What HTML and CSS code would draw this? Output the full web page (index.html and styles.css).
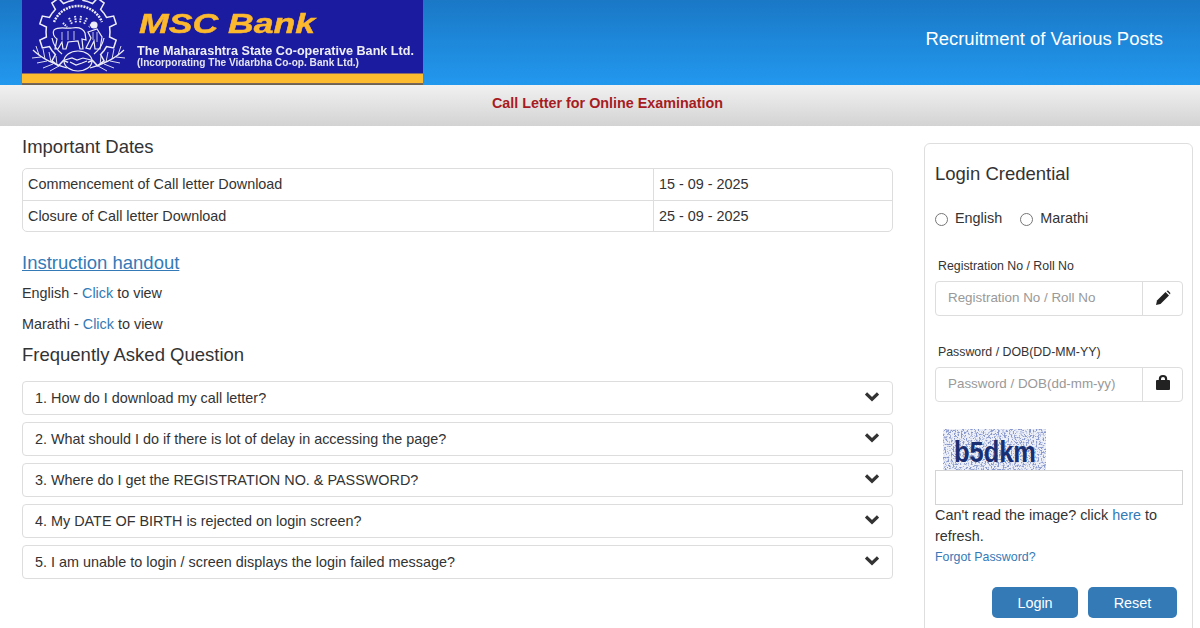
FILE: index.html
```html
<!DOCTYPE html>
<html lang="en">
<head>
<meta charset="utf-8">
<title>MSC Bank - Recruitment of Various Posts</title>
<link rel="stylesheet" href="styles.css">
</head>
<body>
<header class="top">
  <svg class="logo" width="401" height="85" viewBox="0 0 401 85">
    <defs>
      <path id="tooth" d="M-9.900-30.400L-5-31.600L-4.100-38.800L4.100-38.800L5-31.600L9.900-30.400"/>
      <g id="wheat"><path d="M0 0C8 8 22 15 34 18"/><path d="M6 5L3-4M12 9L10-1M18 12L16 2M24 15L23 6M8 7L-1 8M14 11L4 13M20 14L10 18M26 16L17 21" stroke-width=".9"/></g>
      <filter id="soft"><feGaussianBlur stdDeviation="0.35"/></filter>
      <filter id="shadow" x="-5%" y="-30%" width="110%" height="160%"><feGaussianBlur stdDeviation="0.3"/></filter>
    </defs>
    <rect width="401" height="85" fill="#1b1ba0"/>
    <rect y="73.500" width="401" height="10" fill="#fdbb30"/>
    <rect y="83.500" width="401" height="1.500" fill="#6b6250"/>
    <g filter="url(#soft)">
      <g transform="translate(56 32)" fill="none" stroke="#eeeef9" stroke-width="1.500">
        <use href="#tooth"/><use href="#tooth" transform="rotate(36)"/><use href="#tooth" transform="rotate(72)"/><use href="#tooth" transform="rotate(108)"/><use href="#tooth" transform="rotate(144)"/><use href="#tooth" transform="rotate(216)"/><use href="#tooth" transform="rotate(252)"/><use href="#tooth" transform="rotate(288)"/><use href="#tooth" transform="rotate(324)"/>
        <path d="M-24 -10A26 26 0 0 1 24 -10" stroke-width="2.500" stroke-dasharray="2 1"/>
        <path d="M-15-9L-11-5M-9-14L-6-8M-3-16L-2-9M3-16L2-9M9-14L6-8M15-9L11-5" stroke-width="2" stroke-dasharray="1.500 1"/>
        <path d="M-26 6A27 27 0 0 0 -16 22M26 6A27 27 0 0 1 16 22" stroke-width="1.200"/>
      </g>
      <g fill="none" stroke="#eeeef9" stroke-width="1.200">
        <path d="M32 30C37 26 44 29 50 28C56 27 61 28 63 33L64 40L60 39L61 49L58 49L56 41L46 42L44 49L41 49L40 42L36 49L33 49L35 39C32 37 30 33 32 30Z"/>
        <path d="M40 32L40 40M46 31L46 40M52 31L52 40" stroke-width=".8"/>
        <circle cx="72" cy="25" r="3" fill="#eeeef9"/>
        <path d="M66 32L75 29L80 37L78 49L73 49L72 41L68 49L64 48L69 38Z"/>
        <path d="M71 32L71 40M75 32L75 42" stroke-width=".8"/>
        <ellipse cx="56" cy="61" rx="14" ry="10"/>
        <path d="M43 60L50 58L55 60L61 58L69 60M48 62L54 65L60 63L65 61"/>
        <use href="#wheat" transform="translate(11 50)"/>
        <use href="#wheat" transform="translate(102 50) scale(-1 1)"/>
      </g>
    </g>
    <text class="logo-name" x="117" y="33" textLength="176" lengthAdjust="spacingAndGlyphs">MSC Bank</text>
    <text class="logo-line" x="115" y="54.500" textLength="277" lengthAdjust="spacingAndGlyphs">The Maharashtra State Co-operative Bank Ltd.</text>
    <text class="logo-sub" x="115" y="66" textLength="222" lengthAdjust="spacingAndGlyphs">(Incorporating The Vidarbha Co-op. Bank Ltd.)</text>
  </svg>
  <div class="top-title">Recruitment of Various Posts</div>
</header>
<div class="band">Call Letter for Online Examination</div>
<main class="page">
  <section class="left">
    <h2 class="sec-title">Important Dates</h2>
    <table class="dates">
      <tr><td class="dates-name">Commencement of Call letter Download</td><td>15 - 09 - 2025</td></tr>
      <tr><td class="dates-name">Closure of Call letter Download</td><td>25 - 09 - 2025</td></tr>
    </table>
    <a class="handout" href="#">Instruction handout</a>
    <p class="view">English - <a href="#">Click</a> to view</p>
    <p class="view">Marathi - <a href="#">Click</a> to view</p>
    <h2 class="sec-title faq-title">Frequently Asked Question</h2>
    <div class="faq">
      <div class="faq-item"><span>1. How do I download my call letter?</span><svg class="chev" width="14" height="11" viewBox="0 0 14 11"><path d="M1 2.500L7 8.200L13 2.500" fill="none" stroke="#333" stroke-width="3.200"/></svg></div>
      <div class="faq-item"><span>2. What should I do if there is lot of delay in accessing the page?</span><svg class="chev" width="14" height="11" viewBox="0 0 14 11"><path d="M1 2.500L7 8.200L13 2.500" fill="none" stroke="#333" stroke-width="3.200"/></svg></div>
      <div class="faq-item"><span>3. Where do I get the REGISTRATION NO. &amp; PASSWORD?</span><svg class="chev" width="14" height="11" viewBox="0 0 14 11"><path d="M1 2.500L7 8.200L13 2.500" fill="none" stroke="#333" stroke-width="3.200"/></svg></div>
      <div class="faq-item"><span>4. My DATE OF BIRTH is rejected on login screen?</span><svg class="chev" width="14" height="11" viewBox="0 0 14 11"><path d="M1 2.500L7 8.200L13 2.500" fill="none" stroke="#333" stroke-width="3.200"/></svg></div>
      <div class="faq-item"><span>5. I am unable to login / screen displays the login failed message?</span><svg class="chev" width="14" height="11" viewBox="0 0 14 11"><path d="M1 2.500L7 8.200L13 2.500" fill="none" stroke="#333" stroke-width="3.200"/></svg></div>
    </div>
  </section>
  <aside class="panel">
    <h2 class="panel-title">Login Credential</h2>
    <div class="radios">
      <label class="radio"><span class="dot"></span>English</label>
      <label class="radio"><span class="dot"></span>Marathi</label>
    </div>
    <div class="field-label">Registration No / Roll No</div>
    <div class="group">
      <div class="group-input">Registration No / Roll No</div>
      <div class="group-addon"><svg width="16" height="16" viewBox="0 0 16 16"><path d="M1 15L2 10.500L10.500 2L14 5.500L5.500 14Z" fill="#222"/><path d="M11.500 1L13 .6L15.400 3L15 4.500Z" fill="#222"/></svg></div>
    </div>
    <div class="field-label second">Password / DOB(DD-MM-YY)</div>
    <div class="group">
      <div class="group-input">Password / DOB(dd-mm-yy)</div>
      <div class="group-addon"><svg class="lock" width="14" height="15" viewBox="0 0 14 15"><path d="M0 6Q0 5 1 5H2.800V4Q2.800 0 7 0T11.200 4V5H13Q14 5 14 6V14Q14 15 13 15H1Q0 15 0 14ZM5 5H9V4Q9 2 7 2T5 4Z" fill="#222" fill-rule="evenodd"/></svg></div>
    </div>
    <svg class="captcha" width="103" height="41" viewBox="0 0 103 41">
      <defs><filter id="noise" x="0" y="0" width="100%" height="100%"><feTurbulence type="fractalNoise" baseFrequency="0.6" numOctaves="2" seed="4"/><feColorMatrix values="0 0 0 0 .25  0 0 0 0 .32  0 0 0 0 .62  0 0 0 6 -2.900"/></filter></defs>
      <rect width="103" height="41" fill="#eef0f8"/>
      <rect width="103" height="41" filter="url(#noise)"/>
      <text class="captcha-text" x="11" y="33" textLength="82" lengthAdjust="spacingAndGlyphs">b5dkm</text>
    </svg>
    <div class="captcha-input"></div>
    <p class="refresh">Can't read the image? click <a href="#">here</a> to refresh.</p>
    <a class="forgot" href="#">Forgot Password?</a>
    <div class="actions">
      <button class="btn login" type="button">Login</button>
      <button class="btn reset" type="button">Reset</button>
    </div>
  </aside>
</main>
</body>
</html>
```
FILE: styles.css
```css
html, body { margin: 0; padding: 0; height: 628px; overflow: hidden; }
body { font-family: "Liberation Sans", Arial, sans-serif; font-size: 14.4px; color: #333; background: #fff; }
a { color: #337ab7; text-decoration: none; }

.top { height: 85px; display: flex; align-items: flex-start; padding-left: 22px; background: linear-gradient(#1a78c6, #2298ee); }
.logo { display: block; flex: none; }
.top-title { margin-left: auto; margin-right: 37px; margin-top: 28px; color: #fff; font-size: 18.47px; line-height: 22px; }
.logo-name { font: italic bold 28px "Liberation Sans", Arial, sans-serif; fill: #fdb92f; stroke: #fdb92f; stroke-width: .5px; filter: url(#soft); }
.logo-line { font: bold 12.5px "Liberation Sans", Arial, sans-serif; fill: #eeeef4; filter: url(#shadow); }
.logo-sub { font: bold 10px "Liberation Sans", Arial, sans-serif; fill: #e4e4f0; filter: url(#shadow); }

.band { height: 41px; line-height: 37px; padding-left: 15px; text-align: center; font-weight: bold; font-size: 14.35px; color: #a61c22; background: linear-gradient(#f1f1f1, #d3d3d3); box-sizing: border-box; }

.page { display: flex; align-items: flex-start; padding: 0 7px 0 22px; gap: 31px; }
.left { width: 871px; flex: none; }
.panel { flex: 1; height: 520px; margin-top: 17px; box-sizing: border-box; border: 1px solid #dedede; border-radius: 6px; padding: 0 9px 0 10px; }

.sec-title { margin: 10px 0 0; font-size: 18.5px; font-weight: normal; line-height: 21px; }
.dates { width: 100%; margin-top: 11px; border-collapse: separate; border-spacing: 0; border: 1px solid #ddd; border-radius: 5px; }
.dates td { height: 31px; padding: 0 5px 2px; line-height: 20px; box-sizing: border-box; }
.dates tr + tr td { border-top: 1px solid #ddd; padding-bottom: 1px; }
.dates-name { width: 631px; border-right: 1px solid #ddd; }
.handout { display: inline-block; margin-top: 20px; font-size: 18.5px; line-height: 22px; text-decoration: underline; }
.view { margin: 9px 0 0; line-height: 21px; }
.view + .view { margin-top: 10px; }
.faq-title { margin-top: 9px; }
.faq { margin-top: 16px; display: flex; flex-direction: column; gap: 7px; }
.faq-item { height: 34px; box-sizing: border-box; display: flex; align-items: center; justify-content: space-between; padding: 0 13px 4px 12px; border: 1px solid #ddd; border-radius: 4px; }
.faq-item span { padding-top: 4px; }
.chev { display: block; }

.panel-title { margin: 19px 0 0; font-size: 18.5px; font-weight: normal; line-height: 22px; }
.radios { display: flex; gap: 18px; margin-top: 23px; line-height: 21px; }
.radio { display: flex; align-items: center; gap: 7px; }
.dot { width: 11px; height: 11px; border: 1px solid #767676; border-radius: 50%; margin-top: 1px; }
.field-label { margin: 29px 0 0 3px; font-size: 12.35px; line-height: 16px; }
.field-label.second { margin: 28px 0 1px 3px; }
.group { display: flex; height: 35px; margin-top: 7px; box-sizing: border-box; border: 1px solid #ddd; border-radius: 4px; }
.group-input { flex: 1; padding-left: 12px; color: #999; font-size: 13.4px; line-height: 32px; }
.group-addon { width: 39px; display: flex; align-items: center; justify-content: center; border-left: 1px solid #ddd; padding-bottom: 2px; }
.lock { margin-bottom: 2px; }
.captcha { display: block; margin: 27px 0 0 8px; }
.captcha-text { font: bold 30px "Liberation Sans", Arial, sans-serif; fill: #1a2f72; }
.captcha-input { height: 35px; box-sizing: border-box; border: 1px solid #d4d4d4; }
.refresh { margin: 0; line-height: 21px; }
.forgot { display: block; margin-top: 1px; font-size: 12.4px; line-height: 18px; }
.actions { display: flex; gap: 10px; margin: 21px 0 0 57px; }
.btn { height: 31px; border: 0; border-radius: 5px; background: #337ab7; color: #fff; font: 14.4px "Liberation Sans", Arial, sans-serif; padding: 0; }
.login { width: 86px; }
.reset { width: 89px; }
```
